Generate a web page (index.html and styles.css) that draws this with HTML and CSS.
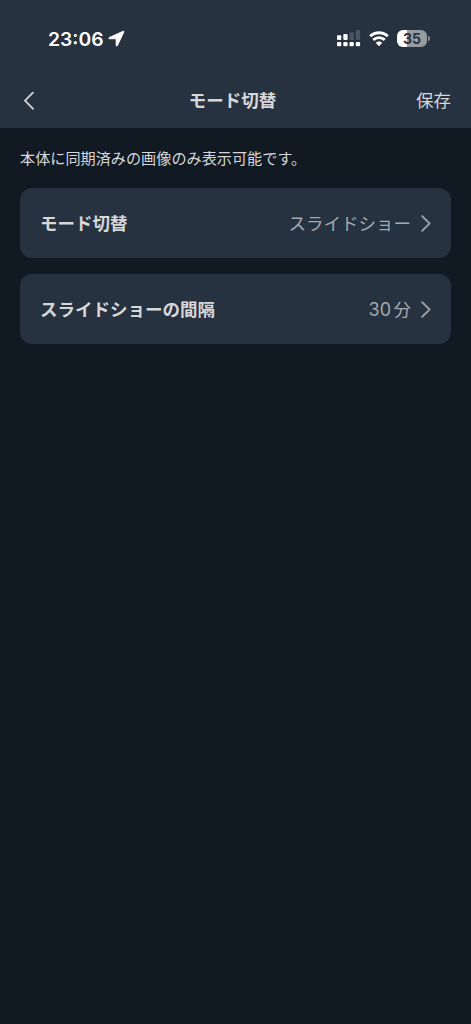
FILE: index.html
```html
<!DOCTYPE html>
<html lang="ja">
<head>
<meta charset="utf-8">
<title>モード切替</title>
<link rel="stylesheet" href="styles.css">
</head>
<body>
<header class="header">
  <div class="status">
    <div class="clock">
      <span class="time">23:06</span>
      <svg class="location" width="17" height="17" viewBox="0 0 17 17"><path d="M15.200 1.200 1.200 7.500c-.7.400-.5 1.300.3 1.300h6.600v6.500c0 .9 1 1 1.400.3L15.900 1.900c.2-.5-.2-.9-.7-.7z" fill="#fff" stroke="#fff" stroke-width=".8" stroke-linejoin="round"/></svg>
    </div>
    <div class="indicators">
      <svg class="signal" width="24" height="17" viewBox="0 0 24 17">
        <g fill="#fff">
          <rect x="0" y="5.300" width="4.300" height="4.800" rx="1"/><rect x="6.300" y="4" width="4.300" height="6.100" rx="1"/>
          <rect x="0" y="12" width="4.300" height="4.300" rx="1.100"/><rect x="6.300" y="12" width="4.300" height="4.300" rx="1.100"/>
          <rect x="12.500" y="12" width="4.300" height="4.300" rx="1.100"/><rect x="18.800" y="12" width="4.300" height="4.300" rx="1.100"/>
        </g>
        <g fill="#4c5663"><rect x="12.500" y="2.300" width="4.300" height="7.800" rx="1"/><rect x="18.800" y="0" width="4.300" height="10.100" rx="1"/></g>
      </svg>
      <svg class="wifi" width="20" height="16" viewBox="0 0 20 16">
        <path d="M1.200 5.300a12.600 12.600 0 0 1 17.600 0M4.300 8.900a8.200 8.200 0 0 1 11.400 0" fill="none" stroke="#fff" stroke-width="2.900"/>
        <path d="M6.700 11.700a4.800 4.800 0 0 1 6.600 0L10 15.200z" fill="#fff"/>
      </svg>
      <div class="battery"><span class="level">35</span><span class="cap"></span></div>
    </div>
  </div>
  <nav class="nav">
    <svg class="back" width="12" height="20" viewBox="0 0 12 20"><path d="M10.900 1.700 3 9.700l7.900 8" fill="none" stroke="#d0d2d5" stroke-width="1.900" stroke-linecap="round" stroke-linejoin="round"/></svg>
    <h1 class="title">モード切替</h1>
    <span class="save">保存</span>
  </nav>
</header>
<main class="content">
  <p class="note">本体に同期済みの画像のみ表示可能です。</p>
  <div class="card">
    <span class="label">モード切替</span>
    <span class="value">スライドショー</span>
    <svg class="chevron" width="10" height="18" viewBox="0 0 10 18"><path d="M1.200 1.200 8.600 8.500l-7.400 7.300" fill="none" stroke="#9b9da1" stroke-width="1.900" stroke-linecap="round" stroke-linejoin="round"/></svg>
  </div>
  <div class="card">
    <span class="label">スライドショーの間隔</span>
    <span class="value"><span class="number">30</span>分</span>
    <svg class="chevron" width="10" height="18" viewBox="0 0 10 18"><path d="M1.200 1.200 8.600 8.500l-7.400 7.300" fill="none" stroke="#9b9da1" stroke-width="1.900" stroke-linecap="round" stroke-linejoin="round"/></svg>
  </div>
</main>
</body>
</html>
```

FILE: styles.css
```css
* { box-sizing: border-box; }
body {
  margin: 0;
  min-height: 1024px;
  background: #111923;
  color: #d5d7d9;
  font-family: Inter, "Noto Sans CJK JP", sans-serif;
}
.header { height: 128px; background: #273241; }
.status {
  height: 74px;
  padding: 3px 41px 0 48px;
  display: flex;
  align-items: center;
  justify-content: space-between;
}
.clock, .indicators { display: flex; align-items: center; }
.clock { gap: 4px; }
.time { width: 56px; font-size: 19.3px; line-height: 24px; font-weight: 600; white-space: nowrap; color: #fff; }
.indicators { gap: 8px; }
.battery {
  position: relative;
  width: 30px;
  height: 17px;
  margin-right: 3px;
  border-radius: 6px;
  background: linear-gradient(90deg, #fff 35%, #969ba2 35%);
  text-align: center;
}
.level { display: block; font-size: 14px; line-height: 17px; font-weight: 700; color: #273241; }
.cap {
  position: absolute;
  right: -2.5px;
  top: 6px;
  width: 1.7px;
  height: 5px;
  border-radius: 0 2px 2px 0;
  background: #858c95;
}
.nav {
  height: 54px;
  padding: 0 20px 0 22px;
  display: grid;
  grid-template-columns: 60px 1fr 68px;
  align-items: center;
}
.title { margin: 0; font-size: 17.5px; line-height: 24px; font-weight: 600; text-align: center; }
.save { font-size: 17.5px; line-height: 24px; text-align: right; }
.content { padding: 19px 20px; display: flex; flex-direction: column; }
.note { margin: 0 0 19px; padding-top: 1px; font-size: 15.15px; line-height: 21.5px; height: 22px; }
.card {
  height: 70px;
  margin-bottom: 16px;
  padding: 2px 20px 0;
  display: flex;
  align-items: center;
  border-radius: 12px;
  background: #273241;
}
.label { flex: 1; font-size: 17.5px; line-height: 24px; font-weight: 700; }
.value { margin-right: 10px; font-size: 17.5px; line-height: 24px; color: #a4a9ae; }
.number { margin-right: 2.5px; font-size: 18px; }
```
